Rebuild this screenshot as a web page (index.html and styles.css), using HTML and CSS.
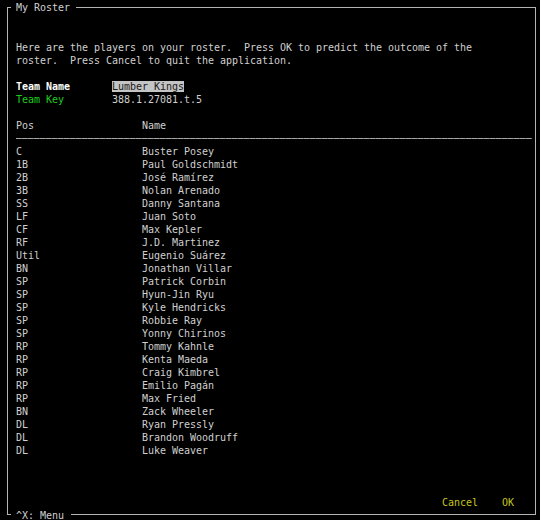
FILE: index.html
```html
<!DOCTYPE html>
<html>
<head>
<meta charset="utf-8">
<link rel="stylesheet" href="styles.css">
</head>
<body>
<div class="frame">
  <div class="title">My Roster</div>
  <div class="content">
    <p class="intro">Here are the players on your roster.  Press OK to predict the outcome of the
roster.  Press Cancel to quit the application.</p>
    <div class="info">
      <div class="kv"><span class="key-bold">Team Name</span><span><span class="hl">Lumber Kings</span></span></div>
      <div class="kv"><span class="key-green">Team Key</span><span>388.1.27081.t.5</span></div>
    </div>
    <div class="roster">
      <div class="row head"><span>Pos</span><span>Name</span></div>
      <div class="sep"></div>
      <div class="row"><span>C</span><span>Buster Posey</span></div>
      <div class="row"><span>1B</span><span>Paul Goldschmidt</span></div>
      <div class="row"><span>2B</span><span>José Ramírez</span></div>
      <div class="row"><span>3B</span><span>Nolan Arenado</span></div>
      <div class="row"><span>SS</span><span>Danny Santana</span></div>
      <div class="row"><span>LF</span><span>Juan Soto</span></div>
      <div class="row"><span>CF</span><span>Max Kepler</span></div>
      <div class="row"><span>RF</span><span>J.D. Martinez</span></div>
      <div class="row"><span>Util</span><span>Eugenio Suárez</span></div>
      <div class="row"><span>BN</span><span>Jonathan Villar</span></div>
      <div class="row"><span>SP</span><span>Patrick Corbin</span></div>
      <div class="row"><span>SP</span><span>Hyun-Jin Ryu</span></div>
      <div class="row"><span>SP</span><span>Kyle Hendricks</span></div>
      <div class="row"><span>SP</span><span>Robbie Ray</span></div>
      <div class="row"><span>SP</span><span>Yonny Chirinos</span></div>
      <div class="row"><span>RP</span><span>Tommy Kahnle</span></div>
      <div class="row"><span>RP</span><span>Kenta Maeda</span></div>
      <div class="row"><span>RP</span><span>Craig Kimbrel</span></div>
      <div class="row"><span>RP</span><span>Emilio Pagán</span></div>
      <div class="row"><span>RP</span><span>Max Fried</span></div>
      <div class="row"><span>BN</span><span>Zack Wheeler</span></div>
      <div class="row"><span>DL</span><span>Ryan Pressly</span></div>
      <div class="row"><span>DL</span><span>Brandon Woodruff</span></div>
      <div class="row"><span>DL</span><span>Luke Weaver</span></div>
    </div>
    <div class="actions"><span class="btn">Cancel</span><span class="btn">OK</span></div>
  </div>
  <div class="menu">^X: Menu</div>
</div>
</body>
</html>
```
FILE: styles.css
```css
html, body {
  margin: 0;
  padding: 0;
  background: #000;
}
body {
  width: 540px;
  height: 520px;
  overflow: hidden;
  font-family: "DejaVu Sans Mono", "Liberation Mono", monospace;
  font-size: 10px;
  line-height: 13px;
  letter-spacing: -0.02px;
  color: #d0d0d0;
}
.frame {
  position: relative;
  box-sizing: border-box;
  margin: 7px 0 0 7px;
  width: 529px;
  height: 508px;
  border: 1px solid #b4b4b4;
}
.title,
.menu {
  position: absolute;
  left: 3px;
  height: 13px;
  background: #000;
  padding: 0 6px 0 5px;
  white-space: pre;
}
.title { top: -7px; }
.menu { bottom: -8px; padding-right: 7px; }
.content {
  box-sizing: border-box;
  height: 100%;
  display: flex;
  flex-direction: column;
  padding: 33px 2px 5px 8px;
}
.intro {
  margin: 0 0 13px 0;
  white-space: pre;
}
.info { margin-bottom: 13px; }
.kv {
  display: grid;
  grid-template-columns: 96px 1fr;
  height: 13px;
}
.key-bold { font-weight: bold; color: #ffffff; }
.key-green { color: #1fcc1f; }
.hl { background: #c4c4c4; color: #1a1a1a; }
.row {
  display: grid;
  grid-template-columns: 126px 1fr;
  height: 13px;
  white-space: pre;
}
.sep {
  margin-right: 1px;
  height: 13px;
  background: repeating-linear-gradient(90deg, #a8a8a8 0 5px, #7a7a7a 5px 6px) center / 100% 1px no-repeat;
}
.actions {
  margin-top: auto;
  display: flex;
  justify-content: flex-end;
  gap: 24px;
  padding-right: 19px;
  height: 13px;
}
.btn { color: #c6c61c; }
```
